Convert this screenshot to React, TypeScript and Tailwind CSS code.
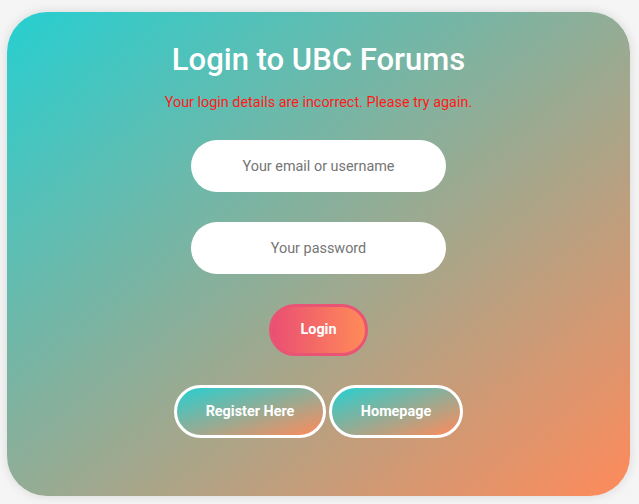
import React from "react";

const grad = "bg-[linear-gradient(to_bottom_right,#26cfd1,#ff8a5a)]";

export default function App() {
  return (
    <div
      className="w-[639px] h-[504px] bg-[#f5f5f5] pt-[12px] pl-[7px]"
      style={{ fontFamily: "Roboto, 'Liberation Sans', sans-serif" }}
    >
      <div className={`w-[623px] h-[484px] rounded-[40px] ${grad} shadow-[0_0_12px_rgba(0,0,0,0.12)] flex flex-col items-center pt-[30px]`}>
        <h1 className="text-[31px] leading-[36px] font-medium text-white">Login to UBC Forums</h1>
        <p className="mt-[17px] text-[14.4px] leading-[16px] text-[#ff1a1a]">
          Your login details are incorrect. Please try again.
        </p>
        <input
          placeholder="Your email or username"
          className="mt-[29px] w-[255px] h-[52px] rounded-full bg-white text-center text-[14.4px] text-[#333] placeholder:text-[#757575] outline-none"
        />
        <input
          type="password"
          placeholder="Your password"
          className="mt-[30px] w-[255px] h-[52px] rounded-full bg-white text-center text-[14.4px] text-[#333] placeholder:text-[#757575] outline-none"
        />
        <button className="mt-[30px] w-[99px] h-[52px] rounded-full border-[3px] border-[#ea5474] bg-[linear-gradient(to_right,#ea4f72,#ff8a58)] text-white font-bold text-[14.4px]">
          Login
        </button>
        <div className="mt-[29px] flex gap-[3px]">
          <button className={`w-[152px] h-[53px] rounded-full border-[3px] border-white ${grad} text-white font-bold text-[14.4px]`}>
            Register Here
          </button>
          <button className={`w-[134px] h-[53px] rounded-full border-[3px] border-white ${grad} text-white font-bold text-[14.4px]`}>
            Homepage
          </button>
        </div>
      </div>
    </div>
  );
}
